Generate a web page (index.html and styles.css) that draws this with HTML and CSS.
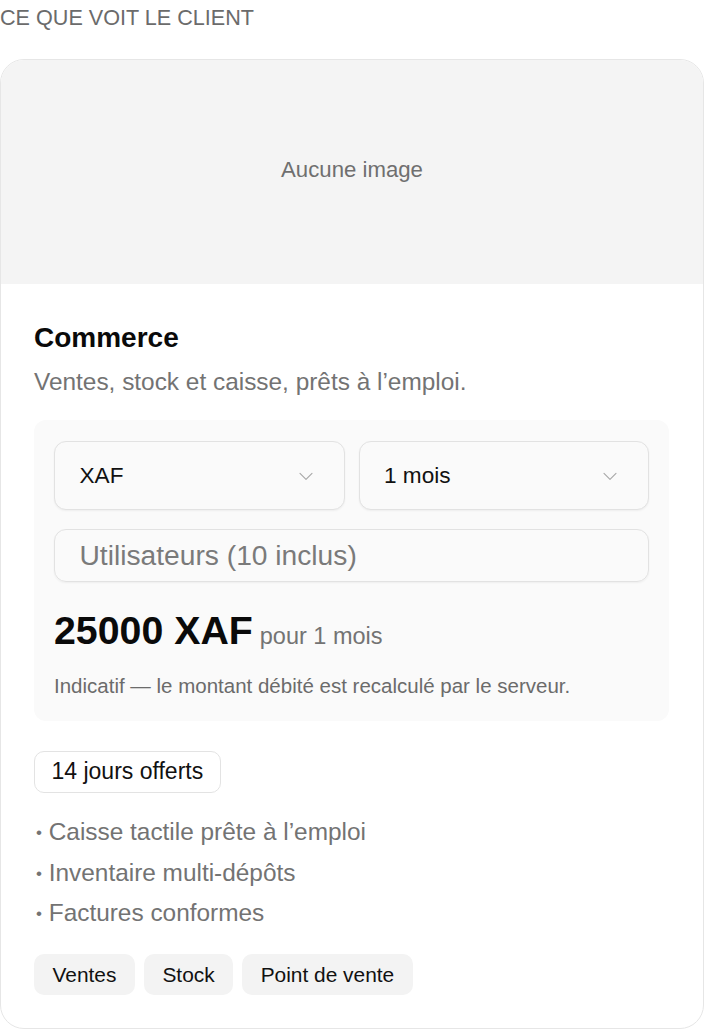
FILE: index.html
```html
<!DOCTYPE html>
<html lang="fr">
<head>
<meta charset="utf-8">
<link rel="stylesheet" href="styles.css">
</head>
<body>
<div class="label">CE QUE VOIT LE CLIENT</div>
<div class="card">
  <div class="media">Aucune image</div>
  <div class="body">
    <h2 class="title">Commerce</h2>
    <p class="desc">Ventes, stock et caisse, prêts à l’emploi.</p>
    <div class="config">
      <div class="row">
        <div class="select"><span>XAF</span>
          <svg class="chev" width="18" height="18" viewBox="0 0 24 24" fill="none" stroke="currentColor" stroke-width="1.5" stroke-linecap="round" stroke-linejoin="round"><path d="M4 8.5l8 8 8-8"/></svg>
        </div>
        <div class="select"><span>1 mois</span>
          <svg class="chev" width="18" height="18" viewBox="0 0 24 24" fill="none" stroke="currentColor" stroke-width="1.5" stroke-linecap="round" stroke-linejoin="round"><path d="M4 8.5l8 8 8-8"/></svg>
        </div>
      </div>
      <div class="input">Utilisateurs (10 inclus)</div>
      <div class="price"><span class="amount">25000 XAF</span><span class="per">pour 1 mois</span></div>
      <p class="note">Indicatif — le montant débité est recalculé par le serveur.</p>
    </div>
    <div class="badge">14 jours offerts</div>
    <ul class="features">
      <li><span class="dot">•</span> Caisse tactile prête à l’emploi</li>
      <li><span class="dot">•</span> Inventaire multi-dépôts</li>
      <li><span class="dot">•</span> Factures conformes</li>
    </ul>
    <div class="tags">
      <span class="tag">Ventes</span>
      <span class="tag">Stock</span>
      <span class="tag">Point de vente</span>
    </div>
  </div>
</div>
</body>
</html>
```
FILE: styles.css
```css
* { box-sizing: border-box; }
html, body { margin: 0; padding: 0; background: #fff; }
body { font-family: "Liberation Sans", Arial, sans-serif; color: #111; }
.label {
  font-size: 21.6px;
  color: #6b6b6b;
  padding-top: 5px;
  height: 59px;
  line-height: 25px;
}
.card {
  border: 1.5px solid #e6e6e6;
  border-radius: 24px;
  overflow: hidden;
  width: 704px;
  height: 970px;
}
.media {
  height: 224px;
  background: #f4f4f4;
  display: flex;
  align-items: center;
  justify-content: center;
  font-size: 22.2px;
  color: #6f6f6f;
  padding-bottom: 4px;
}
.body { padding: 37.5px 34px 0 33px; }
.title {
  font-weight: 700;
  font-size: 28px;
  margin: 0;
  line-height: 32px;
  color: #0a0a0a;
}
.desc {
  font-size: 24.4px;
  color: #737373;
  margin: 12px 0 0;
  line-height: 32px;
}
.config {
  margin-top: 22.5px;
  background: #fafafa;
  border-radius: 12px;
  padding: 21px 20px 20px 20px;
  height: 301px;
}
.row { display: flex; gap: 14px; }
.select {
  flex: 1;
  height: 69px;
  border: 1.5px solid #e2e2e2;
  border-radius: 12px;
  background: #fafafa;
  box-shadow: 0 1px 2px rgba(0,0,0,0.05);
  display: flex;
  align-items: center;
  justify-content: space-between;
  padding: 0 29px 0 24.5px;
  font-size: 22.6px;
  color: #111;
}
.chev { color: #a8a8a8; }
.input {
  margin-top: 19px;
  height: 53px;
  border: 1.5px solid #e2e2e2;
  border-radius: 12px;
  box-shadow: 0 1px 2px rgba(0,0,0,0.05);
  display: flex;
  align-items: center;
  padding: 0 24.5px;
  font-size: 28.2px;
  color: #7a7a7a;
}
.price { margin-top: 26px; line-height: 44px; height: 44px; }
.amount {
  font-weight: 700;
  font-size: 39.3px;
  color: #0a0a0a;
}
.per {
  margin-left: 7px;
  font-size: 23.5px;
  color: #737373;
}
.note {
  margin: 22px 0 0;
  font-size: 20.5px;
  color: #6b6b6b;
  line-height: 24px;
}
.badge {
  display: inline-block;
  margin-top: 30px;
  height: 42px;
  line-height: 39px;
  padding: 0 16.5px;
  border: 1.5px solid #e3e3e3;
  border-radius: 10px;
  font-size: 23px;
  color: #111;
}
.features {
  list-style: none;
  margin: 19px 0 0;
  padding: 0 0 0 2px;
}
.features li {
  font-size: 24.4px;
  color: #737373;
  line-height: 40.5px;
  height: 40.5px;
  overflow: hidden;
}
.dot { font-size: 17px; vertical-align: 2px; }
.tags { display: flex; gap: 9px; margin-top: 20px; }
.tag {
  background: #f3f3f3;
  border-radius: 10px;
  height: 41px;
  line-height: 41px;
  padding: 0 18.5px;
  font-size: 20.9px;
  color: #111;
}
```
